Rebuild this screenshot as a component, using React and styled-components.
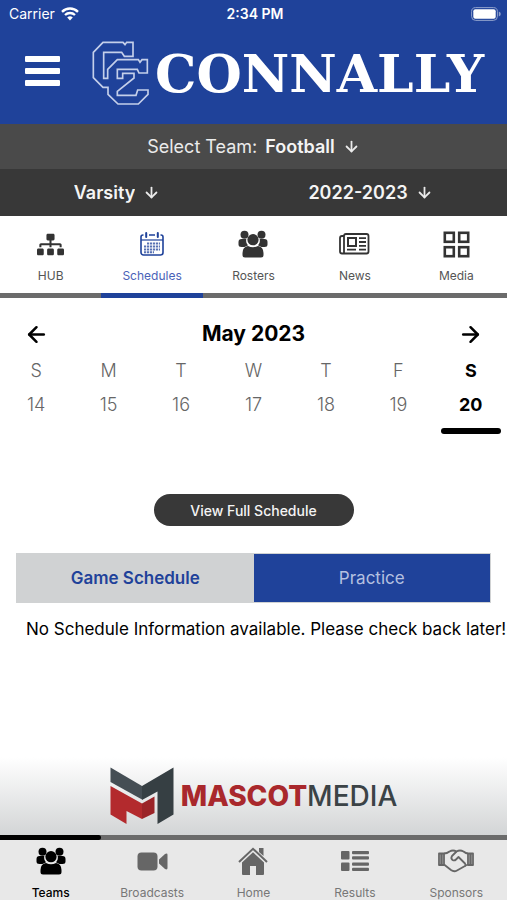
import React, { useState } from "react";
import styled, { createGlobalStyle } from "styled-components";
import { FaSitemap } from "react-icons/fa";
import { ArrowDown, ArrowLeft, ArrowRight } from "lucide-react";

const colors = {
  blue: "#1f429a",
  lightBlue: "#4a62b8",
  dark: "#383838",
  darkGrey: "#4a4a4a",
  grey: "#6b6b6b",
  lightGrey: "#d0d2d3",
  lighterGrey: "#e8e8e8"
};

const GlobalStyle = createGlobalStyle`
  * {
    box-sizing: border-box;
  }
  body {
    margin: 0;
    background: white;
    font-family: Inter, "Liberation Sans", sans-serif;
  }
  button, select {
    font-family: inherit;
    border: none;
    padding: 0;
    background: none;
    cursor: pointer;
  }
`;

const PageSC = styled.div`
  display: flex;
  flex-direction: column;
  min-height: 100vh;
`;

const HeaderSC = styled.header`
  background: ${colors.blue};
  color: white;
`;

const StatusBarSC = styled.div`
  display: grid;
  grid-template-columns: 1fr auto 1fr;
  align-items: center;
  height: 27px;
  padding: 0 6px 0 9px;
  font-size: 14px;
`;

const CarrierSC = styled.span`
  display: flex;
  align-items: center;
  gap: 6px;
`;

const ClockSC = styled.span`
  font-weight: 600;
`;

const BatterySC = styled.svg`
  justify-self: end;
`;

const BrandRowSC = styled.div`
  display: flex;
  align-items: center;
  height: 97px;
  padding: 0 16px 4px 25px;
`;

const MenuButtonSC = styled.button`
  display: flex;
  flex-direction: column;
  gap: 6px;
  width: 35px;
  margin-right: 32px;
  padding-bottom: 5px;
`;

const MenuLineSC = styled.span`
  height: 6px;
  border-radius: 1px;
  background: white;
`;

const SchoolSC = styled.h1`
  margin: 0 0 0 5px;
  font-family: "DejaVu Serif", serif;
  font-size: 52px;
  line-height: 60px;
  font-weight: bold;
`;

const TeamBarSC = styled.div`
  display: flex;
  justify-content: center;
  align-items: center;
  height: 45px;
  background: ${colors.darkGrey};
`;

const FilterBarSC = styled.div`
  display: grid;
  grid-template-columns: 6fr 7fr;
  align-items: center;
  height: 47px;
  background: ${colors.dark};
`;

const PickerSC = styled.label`
  display: flex;
  justify-content: center;
  align-items: center;
  gap: 8px;
  color: #ebebeb;
  font-size: 18px;
`;

const SelectSC = styled.select`
  appearance: none;
  field-sizing: content;
  color: #f4f4f4;
  font-size: 18px;
  font-weight: 600;
`;

const TabsSC = styled.nav`
  display: grid;
  grid-template-columns: repeat(5, 1fr);
`;

const TabSC = styled.button`
  display: flex;
  flex-direction: column;
  align-items: center;
  height: 82px;
  padding-top: 12px;
  border-bottom: 5px solid ${props => (props.$active ? colors.blue : colors.grey)};
  color: ${props => (props.$active ? colors.blue : "#333")};
`;

const IconBoxSC = styled.span`
  display: flex;
  justify-content: center;
  align-items: center;
  height: 32px;
`;

const TabTextSC = styled.span`
  margin-top: 8px;
  color: ${props => (props.$active ? colors.lightBlue : "#555")};
  font-size: 12px;
  line-height: 15px;
`;

const MainSC = styled.main`
  flex: 1;
`;

const MonthRowSC = styled.div`
  display: flex;
  justify-content: space-between;
  align-items: center;
  padding: 20px 24px 0;
`;

const MonthSC = styled.h2`
  margin: 0;
  font-size: 21px;
  line-height: 32px;
  font-weight: 700;
`;

const ArrowButtonSC = styled.button`
  display: flex;
  color: black;
`;

const WeekSC = styled.div`
  display: grid;
  grid-template-columns: repeat(7, 1fr);
  padding-top: 4px;
`;

const DaySC = styled.button`
  display: flex;
  flex-direction: column;
  align-items: center;
  color: ${props => (props.$active ? "black" : "#666")};
  font-size: 18px;
  line-height: 34px;
  font-weight: ${props => (props.$active ? 700 : 300)};
  &::after {
    content: "";
    width: 60px;
    height: 6px;
    margin-top: 6px;
    border-radius: 3px;
    background: ${props => (props.$active ? "black" : "transparent")};
  }
`;

const FullButtonSC = styled.button`
  display: block;
  width: 200px;
  height: 32px;
  margin: 60px auto 27px;
  border-radius: 16px;
  background: ${colors.dark};
  color: #f4f4f4;
  font-size: 14px;
  font-weight: 500;
`;

const SwitchSC = styled.div`
  display: grid;
  grid-template-columns: 1fr 1fr;
  margin: 0 16px;
  border: 1px solid ${colors.lightGrey};
`;

const SwitchButtonSC = styled.button`
  height: 48px;
  background: ${props => (props.$active ? colors.lightGrey : colors.blue)};
  color: ${props => (props.$active ? colors.blue : "#b4c0e0")};
  font-size: 17px;
  font-weight: ${props => (props.$active ? 600 : 400)};
`;

const MessageSC = styled.p`
  margin: 14px 0 0 26px;
  font-size: 17px;
  line-height: 24px;
  white-space: nowrap;
`;

const SponsorSC = styled.a`
  display: flex;
  justify-content: center;
  align-items: center;
  gap: 7px;
  height: 78px;
  background: linear-gradient(white, #d3d5d6);
  color: #3b4346;
  font-size: 28px;
  text-decoration: none;
`;

const SponsorNameSC = styled.span`
  font-weight: 500;
  b {
    color: #a9282c;
    font-weight: 800;
  }
`;

const FooterSC = styled.footer`
  display: grid;
  grid-template-columns: repeat(5, 1fr);
  background: linear-gradient(${colors.grey}, ${colors.grey}) top / 100% 5px no-repeat
    ${colors.lighterGrey};
`;

const FooterButtonSC = styled.button`
  display: flex;
  flex-direction: column;
  align-items: center;
  height: 65px;
  color: ${props => (props.$active ? "black" : "#666")};
  &::before {
    content: "";
    width: 100%;
    height: 5px;
    border-radius: 0 3px 3px 0;
    background: ${props => (props.$active ? "black" : "transparent")};
  }
`;

const FooterIconSC = styled(IconBoxSC)`
  height: 42px;
  margin-bottom: 3px;
`;

const FooterTextSC = styled.span`
  color: ${props => (props.$active ? "black" : "#777")};
  font-size: 12px;
  line-height: 15px;
  font-weight: ${props => (props.$active ? 500 : 400)};
`;

// End Styling

const WifiIcon = () => (
  <svg width="18" height="14" viewBox="0 0 18 14" fill="none" stroke="white">
    <path d="M1 4.8a11.5 11.5 0 0 1 16 0" strokeWidth="2.4" />
    <path d="M4 8a7.3 7.3 0 0 1 10 0" strokeWidth="2.3" />
    <path d="M6.2 10.6a4 4 0 0 1 5.6 0L9 13.4z" fill="white" stroke="none" />
  </svg>
);

const BatteryIcon = () => (
  <BatterySC width="30" height="14" viewBox="0 0 30 14">
    <rect x=".6" y=".6" width="25.8" height="12.8" rx="4" fill="none" stroke="#8fa0cc" />
    <rect x="2.3" y="2.3" width="22.4" height="9.4" rx="2" fill="white" />
    <path d="M27.8 4.6q2 .6 2 2.4t-2 2.4z" fill="#8fa0cc" />
  </BatterySC>
);

const SchoolLogo = () => (
  <svg width="58" height="66" viewBox="21 20 174 198" fill="none" stroke="#c4cfea" strokeWidth="5">
    <path d="M69 159H54L25 130V54L54 24H114L120 31L125 24H144V66H118L110 54H56V132H68V105L97 76H160L165 84L171 76H187V116H162L157 105H97V132H113V117H147V131L97 171V183H153L158 167H189V180L160 209H99L69 180Z" />
  </svg>
);

const CalendarIcon = () => (
  <svg width="24" height="26" viewBox="0 0 24 26" fill="none" stroke="currentColor">
    <path d="M3.500 4H3a2 2 0 0 0-2 2v15.500a2.500 2.500 0 0 0 2.500 2.500h17a2.500 2.500 0 0 0 2.500-2.500V6a2 2 0 0 0-2-2h-.5M9 4h6" strokeWidth="1.600" />
    <path d="M1 9h22" strokeWidth="1.200" />
    <path d="M6.200 2v4M17.800 2v4" strokeWidth="2" strokeLinecap="round" />
    <path d="M7 12.400h13M4 15.400h16M4 18.400h16M4 21.200h10" strokeWidth="2" strokeDasharray="2.200 .8" opacity=".75" />
  </svg>
);

const GroupIcon = () => (
  <svg width="30" height="28" viewBox="0 0 30 28" fill="currentColor">
    <circle cx="6.500" cy="4.800" r="4" />
    <circle cx="23.500" cy="4.800" r="4" />
    <path d="M3.5 9h4.800a7 7 0 0 0 1.800 6.300L6.500 17H3.500Q.5 17 .5 14.500V12q0-3 3-3z" />
    <path d="M26.500 9h-4.800a7 7 0 0 1-1.800 6.300L23.500 17h3q3 0 3-2.500V12q0-3-3-3z" />
    <circle cx="15" cy="9.700" r="5.600" />
    <path d="M10 16q5 2.500 10 0 5.500 1 5.500 7v2q0 2.500-2.500 2.500H7Q4.500 27.500 4.500 25v-2q0-6 5.500-7z" />
  </svg>
);

const NewsIcon = () => (
  <svg width="31" height="22" viewBox="0 0 31 22" fill="none" stroke="currentColor" strokeWidth="1.800">
    <path d="M5 20.500V3q0-2 2-2h20.500q2 0 2 2v15.500q0 2-2 2H3q-2 0-2-2V5q0-2 2-2h2" />
    <rect x="9" y="5" width="8" height="8" strokeWidth="2" />
    <path d="M20 5.200h7M20 9h7M20 12.800h7M8 16.600h9M20 16.600h7" />
  </svg>
);

const SquaresIcon = () => (
  <svg width="27" height="27" viewBox="0 0 27 27" fill="none" stroke="currentColor" strokeWidth="2.600">
    <rect x="1.800" y="1.800" width="9" height="9" />
    <rect x="16.200" y="1.800" width="9" height="9" />
    <rect x="1.800" y="16.200" width="9" height="9" />
    <rect x="16.200" y="16.200" width="9" height="9" />
  </svg>
);

const CameraIcon = () => (
  <svg width="31" height="19" viewBox="0 0 31 19" fill="currentColor">
    <rect x=".5" y=".5" width="20" height="18" rx="4" />
    <path d="M22 7.500L28 2q2.500-1.200 2.500 1v13q0 2.200-2.500 1l-6-5.500z" />
  </svg>
);

const HomeIcon = () => (
  <svg width="30" height="28" viewBox="0 0 30 28" fill="currentColor">
    <path d="M1 15L15 1.800 29 15" fill="none" stroke="currentColor" strokeWidth="2" />
    <path d="M21 1h4.500v8L21 5z" />
    <path d="M4 15.500L15 5.200l11 10.300V27q0 1-1 1h-7v-9h-6v9H5q-1 0-1-1z" />
  </svg>
);

const ListIcon = () => (
  <svg width="28" height="20" viewBox="0 0 28 20" fill="currentColor">
    <rect width="8.500" height="8.500" rx="1" />
    <rect y="11.500" width="8.500" height="8.500" rx="1" />
    <rect x="11" width="17" height="3.200" rx="1" />
    <rect x="11" y="5.300" width="17" height="3.200" rx="1" />
    <rect x="11" y="11.500" width="17" height="3.200" rx="1" />
    <rect x="11" y="16.800" width="17" height="3.200" rx="1" />
  </svg>
);

const HandshakeIcon = () => (
  <svg width="36" height="24" viewBox="0 0 36 24" fill="none" stroke="currentColor" strokeWidth="1.800" strokeLinejoin="round">
    <path d="M6 4.500Q9 4.500 11.500 2.500 15 .5 18.500 2.500 22 .5 25.500 2.500 28 4.500 30 4.500" />
    <path d="M6 15.500l7 5.500q3 2.200 6 .5l8-4.500q1.500-1 3-1.500" />
    <path d="M18.500 2.500L14 7q-1.500 2.500.5 4 2 1 3.500-.5L20.500 8l6.500 6.500q1 1.500 0 2.500" />
    <path d="M1 4.500h5v11.500H1zM30 4.500h5v11.500h-5z" />
    <path d="M3.500 5v10.500M32.500 5v10.500" strokeWidth="2.500" />
  </svg>
);

const MascotLogo = () => (
  <svg width="64" height="58" viewBox="0 0 64 58">
    <path d="M.5.500L32 19v13.500L.5 15z" fill="#454e54" />
    <path d="M32 19L63.500.500v47L47.500 57V24.500L32 33z" fill="#363f43" />
    <path d="M.5 19L32 36.500V52L16.500 44v13L.5 47.500z" fill="#b32a2d" />
    <path d="M32 36.500l12.500-7V46L32 52z" fill="#9b2428" />
  </svg>
);

const tabs = [
  { name: "HUB", icon: <FaSitemap size={27} /> },
  { name: "Schedules", icon: <CalendarIcon /> },
  { name: "Rosters", icon: <GroupIcon /> },
  { name: "News", icon: <NewsIcon /> },
  { name: "Media", icon: <SquaresIcon /> }
];

const footerTabs = [
  { name: "Teams", icon: <GroupIcon /> },
  { name: "Broadcasts", icon: <CameraIcon /> },
  { name: "Home", icon: <HomeIcon /> },
  { name: "Results", icon: <ListIcon /> },
  { name: "Sponsors", icon: <HandshakeIcon /> }
];

const days = [
  { weekday: "S", date: 14 },
  { weekday: "M", date: 15 },
  { weekday: "T", date: 16 },
  { weekday: "W", date: 17 },
  { weekday: "T", date: 18 },
  { weekday: "F", date: 19 },
  { weekday: "S", date: 20 }
];

const Picker = props => (
  <PickerSC>
    {props.label}
    <SelectSC aria-label={props.name}>
      <option>{props.value}</option>
    </SelectSC>
    <ArrowDown size={17} strokeWidth={2.5} />
  </PickerSC>
);

const App = () => {
  const [tab, setTab] = useState("Schedules");
  const [footerTab, setFooterTab] = useState("Teams");
  const [day, setDay] = useState(20);
  const [list, setList] = useState("Game Schedule");

  return (
    <PageSC>
      <GlobalStyle />
      <HeaderSC>
        <StatusBarSC>
          <CarrierSC>
            Carrier <WifiIcon />
          </CarrierSC>
          <ClockSC>2:34 PM</ClockSC>
          <BatteryIcon />
        </StatusBarSC>
        <BrandRowSC>
          <MenuButtonSC aria-label="Menu">
            <MenuLineSC />
            <MenuLineSC />
            <MenuLineSC />
          </MenuButtonSC>
          <SchoolLogo />
          <SchoolSC>CONNALLY</SchoolSC>
        </BrandRowSC>
      </HeaderSC>
      <TeamBarSC>
        <Picker label="Select Team:" name="Team" value="Football" />
      </TeamBarSC>
      <FilterBarSC>
        <Picker name="Level" value="Varsity" />
        <Picker name="Season" value="2022-2023" />
      </FilterBarSC>
      <TabsSC>
        {tabs.map(({ name, icon }) => (
          <TabSC key={name} $active={tab === name} onClick={() => setTab(name)}>
            <IconBoxSC>{icon}</IconBoxSC>
            <TabTextSC $active={tab === name}>{name}</TabTextSC>
          </TabSC>
        ))}
      </TabsSC>
      <MainSC>
        <MonthRowSC>
          <ArrowButtonSC aria-label="Previous week">
            <ArrowLeft size={25} strokeWidth={2.4} />
          </ArrowButtonSC>
          <MonthSC>May 2023</MonthSC>
          <ArrowButtonSC aria-label="Next week">
            <ArrowRight size={25} strokeWidth={2.4} />
          </ArrowButtonSC>
        </MonthRowSC>
        <WeekSC>
          {days.map(({ weekday, date }) => (
            <DaySC key={date} $active={day === date} onClick={() => setDay(date)}>
              <span>{weekday}</span>
              <span>{date}</span>
            </DaySC>
          ))}
        </WeekSC>
        <FullButtonSC>View Full Schedule</FullButtonSC>
        <SwitchSC>
          {["Game Schedule", "Practice"].map(name => (
            <SwitchButtonSC key={name} $active={list === name} onClick={() => setList(name)}>
              {name}
            </SwitchButtonSC>
          ))}
        </SwitchSC>
        <MessageSC>No Schedule Information available. Please check back later!</MessageSC>
      </MainSC>
      <SponsorSC href="#sponsor">
        <MascotLogo />
        <SponsorNameSC>
          <b>MASCOT</b>MEDIA
        </SponsorNameSC>
      </SponsorSC>
      <FooterSC>
        {footerTabs.map(({ name, icon }) => (
          <FooterButtonSC
            key={name}
            $active={footerTab === name}
            onClick={() => setFooterTab(name)}
          >
            <FooterIconSC>{icon}</FooterIconSC>
            <FooterTextSC $active={footerTab === name}>{name}</FooterTextSC>
          </FooterButtonSC>
        ))}
      </FooterSC>
    </PageSC>
  );
};

export default App;
